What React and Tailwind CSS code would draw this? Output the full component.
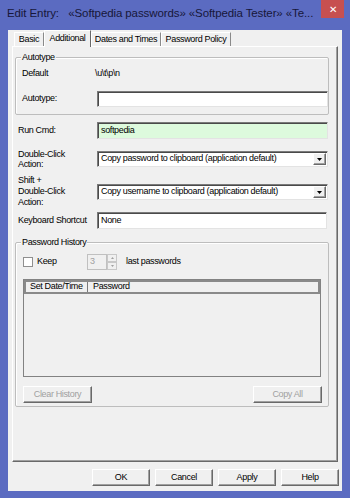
import React from "react";

const sunken =
  "border border-t-[#7a7a7a] border-l-[#7a7a7a] border-r-[#e3e3e3] border-b-[#e3e3e3] shadow-[inset_1px_1px_0_#4a4a4a]";
const raised =
  "border border-t-white border-l-white border-r-[#696969] border-b-[#696969] shadow-[inset_-1px_-1px_0_#a0a0a0]";

const Tab = ({ label, w, active }) =>
  active ? (
    <div
      className={`relative z-10 -mb-px h-[17px] bg-[#f0f0f0] border-t border-l border-r border-t-white border-l-white border-r-[#696969] flex items-center justify-center ${w}`}
    >
      {label}
    </div>
  ) : (
    <div
      className={`h-[14px] border-t border-l border-r border-t-white border-l-white border-r-[#8a8a8a] flex items-center justify-center ${w}`}
    >
      {label}
    </div>
  );

const Select = ({ value, className }) => (
  <div className={`w-[231px] h-[16px] bg-white flex items-center ${sunken} ${className}`}>
    <span className="flex-1 pl-[3px] whitespace-nowrap">{value}</span>
    <div className={`w-[13px] h-[12px] mr-[1px] bg-[#f0f0f0] flex items-center justify-center ${raised}`}>
      <svg width="5" height="3" viewBox="0 0 5 3">
        <path d="M0 0h5L2.5 3z" fill="#000" />
      </svg>
    </div>
  </div>
);

const Group = ({ title, className, children }) => (
  <fieldset
    className={`ml-[2px] w-[314px] border border-[#bdbdbd] rounded-[2px] shadow-[inset_1px_1px_0_#fff] ${className}`}
  >
    <legend className="ml-[5px] px-[1px] leading-[10px] bg-[#f0f0f0]">{title}</legend>
    {children}
  </fieldset>
);

export default function App() {
  return (
    <div className="w-[350px] h-[498px] bg-[#5b6bc1] flex flex-col overflow-hidden font-['Liberation_Sans',Arial,sans-serif] text-[9px] tracking-[-0.35px] text-black">
      {/* title bar */}
      <div className="h-[30px] shrink-0 flex items-start">
        <div className="flex-1 pl-[7px] pt-[5px] text-[11.5px] leading-[16px] tracking-[-0.1px] text-[#17173a] whitespace-pre">
          Edit Entry:   «Softpedia passwords» «Softpedia Tester» «Te...
        </div>
        <div className="w-[23px] h-[18px] mr-[6px] bg-[#c75050] text-white flex items-center justify-center text-[10px] tracking-normal">
          ✕
        </div>
      </div>

      {/* client */}
      <div className="mx-[8px] h-[461px] bg-[#f0f0f0] flex flex-col">
        <div className="h-[16px] ml-[6px] flex items-end">
          <Tab label="Basic" w="w-[30px]" />
          <Tab label="Additional" w="w-[47px]" active />
          <Tab label="Dates and Times" w="w-[70px]" />
          <Tab label="Password Policy" w="w-[70px]" />
        </div>

        <div className="ml-[4px] w-[326px] h-[416px] border border-t-white border-l-white border-r-[#696969] border-b-[#696969] shadow-[inset_-1px_-1px_0_#a0a0a0]">
          <Group title="Autotype" className="mt-[5px] h-[63px]">
            <div className="h-[24px] pl-[6px] flex items-center">
              <span className="w-[73px]">Default</span>
              <span>{"\\u\\t\\p\\n"}</span>
            </div>
            <div className="mt-[5px] pl-[6px] flex items-center">
              <span className="w-[75px]">Autotype:</span>
              <div className={`flex-1 h-[16px] bg-white ${sunken}`} />
            </div>
          </Group>

          <div className="mt-[7px] pl-[5px] h-[17px] flex items-center">
            <span className="w-[79px]">Run Cmd:</span>
            <div className={`w-[231px] h-[17px] bg-[#ddfadd] pl-[3px] flex items-center ${sunken}`}>softpedia</div>
          </div>

          <div className="mt-[10px] pl-[5px] flex items-start">
            <span className="w-[79px] leading-[10px]">
              Double-Click
              <br />
              Action:
            </span>
            <Select className="mt-[2px]" value="Copy password to clipboard (application default)" />
          </div>

          <div className="mt-[6px] pl-[5px] flex items-start">
            <span className="w-[79px] leading-[11px]">
              Shift +
              <br />
              Double-Click
              <br />
              Action:
            </span>
            <Select className="mt-[9px]" value="Copy username to clipboard (application default)" />
          </div>

          <div className="mt-[4px] pl-[5px] h-[17px] flex items-center">
            <span className="w-[79px] whitespace-nowrap">Keyboard Shortcut</span>
            <div className={`w-[230px] h-[17px] bg-white pl-[3px] flex items-center ${sunken}`}>None</div>
          </div>

          <Group title="Password History" className="mt-[8px] h-[170px]">
            <div className="mt-[7px] pl-[7px] h-[16px] flex items-center">
              <div className="w-[10px] h-[10px] bg-white border border-[#8f8f8f]" />
              <span className="ml-[4px] w-[50px]">Keep</span>
              <div className="w-[20px] h-[16px] border border-[#c0c0c0] pl-[2px] flex items-center text-[#a0a0a0]">3</div>
              <div className="w-[10px] h-[16px] flex flex-col">
                <div className="flex-1 border border-[#c8c8c8] flex items-center justify-center">
                  <svg width="3" height="2" viewBox="0 0 3 2"><path d="M0 2h3L1.5 0z" fill="#a0a0a0" /></svg>
                </div>
                <div className="flex-1 border border-[#c8c8c8] flex items-center justify-center">
                  <svg width="3" height="2" viewBox="0 0 3 2"><path d="M0 0h3L1.5 2z" fill="#a0a0a0" /></svg>
                </div>
              </div>
              <span className="ml-[9px]">last passwords</span>
            </div>

            <div className="mt-[9px] ml-[7px] w-[298px] h-[98px] border border-[#828282] bg-[#f0f0f0]">
              <div className="h-[14px] flex border-2 border-[#8a8a8a] bg-[#f0f0f0]">
                <div className="w-[62px] pl-[4px] border-r border-[#7a7a7a] flex items-center">Set Date/Time</div>
                <div className="flex-1 pl-[5px] flex items-center">Password</div>
              </div>
            </div>

            <div className="mt-[9px] pl-[7px] pr-[6px] flex justify-between text-[#a0a0a0]">
              <div className={`w-[69px] h-[17px] flex items-center justify-center ${raised}`}>Clear History</div>
              <div className={`w-[69px] h-[17px] flex items-center justify-center ${raised}`}>Copy All</div>
            </div>
          </Group>
        </div>

        <div className="mt-[7px] pr-[3px] flex justify-end gap-[5px]">
          {["OK", "Cancel", "Apply", "Help"].map((b) => (
            <div key={b} className={`w-[58px] h-[17px] flex items-center justify-center ${raised}`}>
              {b}
            </div>
          ))}
        </div>
      </div>
    </div>
  );
}
